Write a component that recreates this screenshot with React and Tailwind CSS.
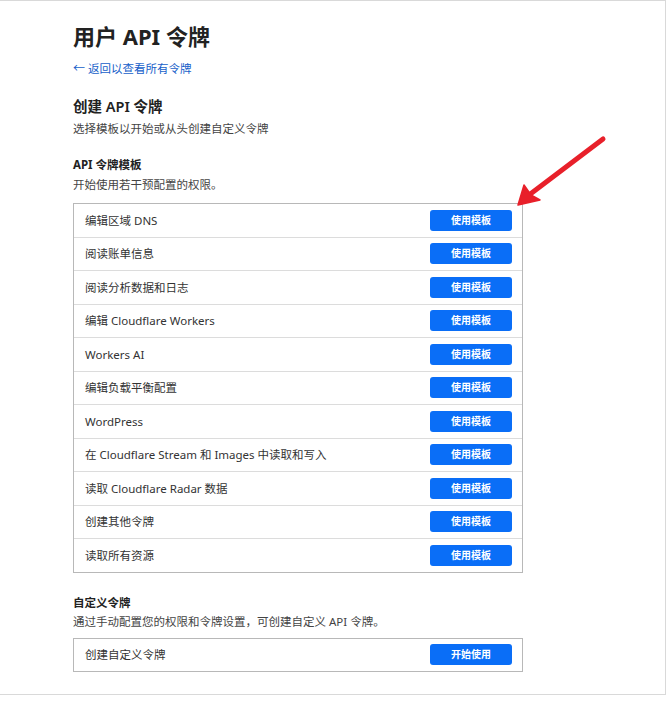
import React from "react";

const rows = [
  "编辑区域 DNS",
  "阅读账单信息",
  "阅读分析数据和日志",
  "编辑 Cloudflare Workers",
  "Workers AI",
  "编辑负载平衡配置",
  "WordPress",
  "在 Cloudflare Stream 和 Images 中读取和写入",
  "读取 Cloudflare Radar 数据",
  "创建其他令牌",
  "读取所有资源",
];

const font = { fontFamily: '"Noto Sans", "Noto Sans CJK SC", sans-serif' };

function Btn({ children }) {
  return (
    <button className="w-[82px] h-[21px] rounded-[3px] bg-[#0a6ef7] text-white text-[10px] font-semibold leading-[21px] text-center">
      {children}
    </button>
  );
}

export default function App() {
  return (
    <div className="relative w-[666px] h-[707px] bg-white text-[#333]" style={font}>
      <div className="border-t border-[#d9d9d9] border-r h-[694px] w-[666px]">
        <div className="pl-[73px] w-[523px]">
          <h1 className="mt-[20px] text-[22px] leading-[30px] font-bold text-[#222]">用户 API 令牌</h1>
          <div className="mt-[9px] text-[11.5px] leading-[18px] text-[#1660c9] flex items-center gap-[3px]">
            <span className="text-[12px]">←</span>
            <span>返回以查看所有令牌</span>
          </div>
          <h2 className="mt-[18px] text-[14.5px] leading-[20px] font-semibold text-[#222]">创建 API 令牌</h2>
          <p className="mt-[4px] text-[11.5px] leading-[18px] text-[#444]">选择模板以开始或从头创建自定义令牌</p>
          <h3 className="mt-[18px] text-[11.5px] leading-[18px] font-bold text-[#222]">API 令牌模板</h3>
          <p className="mt-[2px] text-[11.5px] leading-[18px] text-[#444]">开始使用若干预配置的权限。</p>
          <div className="mt-[9px] border border-[#b8b8b8] flex flex-col">
            {rows.map((r, i) => (
              <div
                key={i}
                className={`box-content h-[32.5px] flex items-center justify-between pl-[11px] pr-[10px] ${i > 0 ? "border-t border-[#dcdcdc]" : ""}`}
              >
                <span className="text-[11.5px] text-[#333]">{r}</span>
                <Btn>使用模板</Btn>
              </div>
            ))}
          </div>
          <h3 className="mt-[21px] text-[11.5px] leading-[18px] font-bold text-[#222]">自定义令牌</h3>
          <p className="mt-[1px] text-[11.5px] leading-[18px] text-[#444]">通过手动配置您的权限和令牌设置，可创建自定义 API 令牌。</p>
          <div className="mt-[7px] h-[34px] border border-[#b8b8b8] flex items-center justify-between pl-[11px] pr-[10px]">
            <span className="text-[11.5px] text-[#333]">创建自定义令牌</span>
            <Btn>开始使用</Btn>
          </div>
        </div>
      </div>
      <div className="border-t border-[#d9d9d9] w-[666px]" />
      <svg className="absolute left-0 top-0 pointer-events-none" width="666" height="707" viewBox="0 0 666 707">
        <line x1="603" y1="139" x2="529" y2="195" stroke="#e8202a" strokeWidth="5" strokeLinecap="round" />
        <path d="M518 205 L524 185 L531 195 L540 200 Z" fill="#e8202a" stroke="#e8202a" strokeWidth="1.5" strokeLinejoin="round" />
      </svg>
    </div>
  );
}
